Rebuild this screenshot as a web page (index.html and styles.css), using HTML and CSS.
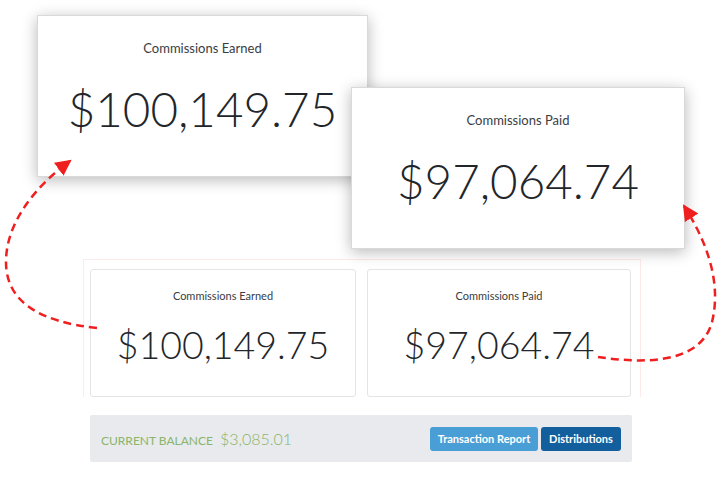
FILE: index.html
```html
<!DOCTYPE html>
<html>
<head>
<meta charset="utf-8">
<link rel="stylesheet" href="styles.css">
</head>
<body>
<div class="stage">
  <div class="callouts">
    <div class="zoom-card zoom-earned">
      <div class="zoom-title">Commissions Earned</div>
      <div class="zoom-value">$100,149.75</div>
    </div>
    <div class="zoom-card zoom-paid">
      <div class="zoom-title">Commissions Paid</div>
      <div class="zoom-value">$97,064.74</div>
    </div>
  </div>

  <div class="dashboard">
    <div class="frame">
      <div class="cards">
        <div class="card">
          <div class="card-title">Commissions Earned</div>
          <div class="card-value">$100,149.75</div>
        </div>
        <div class="card">
          <div class="card-title">Commissions Paid</div>
          <div class="card-value">$97,064.74</div>
        </div>
      </div>
    </div>
    <div class="balance-bar">
      <div class="balance">
        <span class="balance-label">CURRENT BALANCE</span>
        <span class="balance-amount">$3,085.01</span>
      </div>
      <div class="actions">
        <button class="btn btn-light">Transaction Report</button>
        <button class="btn btn-dark">Distributions</button>
      </div>
    </div>
  </div>

  <svg class="arrows" width="728" height="480" viewBox="0 0 728 480">
    <defs>
      <marker id="head" markerUnits="userSpaceOnUse" markerWidth="18" markerHeight="18" refX="14" refY="8" orient="auto">
        <path d="M0,0 L16,8 L0,16 Z" fill="#f01f1f"/>
      </marker>
    </defs>
    <path class="arrow" d="M97,328 C40,322 6,302 6,262 C6,222 36,186 70,161" marker-end="url(#head)"/>
    <path class="arrow" d="M598,357 C640,363 700,366 712,322 C722,282 706,240 684,206" marker-end="url(#head)"/>
  </svg>
</div>
</body>
</html>
```

FILE: styles.css
```css
* { box-sizing: border-box; }
html, body { margin: 0; padding: 0; background: #fff; }
body {
  font-family: Lato, "Open Sans", "Liberation Sans", sans-serif;
  color: #2b2f33;
}
.stage {
  position: relative;
  width: 728px;
  height: 480px;
  overflow: hidden;
}
.callouts {
  height: 259px;
}
.zoom-card {
  position: absolute;
  display: flex;
  flex-direction: column;
  align-items: center;
  background: #fff;
  border: 1px solid #d9d9d9;
  box-shadow: 0 3px 14px rgba(0,0,0,0.28);
  padding-top: 24px;
}
.zoom-earned { left: 37px; top: 15px; width: 331px; height: 162px; z-index: 1; }
.zoom-paid { left: 351px; top: 87px; width: 334px; height: 162px; z-index: 2; }
.zoom-title {
  font-size: 13px;
  line-height: 16px;
  color: #3a3d42;
}
.zoom-value {
  margin-top: 29px;
  font-size: 47.5px;
  line-height: 1;
  font-weight: 300;
  color: #22262b;
}
.dashboard {
  margin-left: 83px;
  width: 558px;
}
.frame {
  border: 1px solid #fdeaea;
  border-bottom: none;
  padding: 9px 10px 0 6px;
}
.cards {
  display: grid;
  grid-template-columns: 266px 264px;
  gap: 11px;
}
.card {
  height: 128px;
  border: 1px solid #e2e4e6;
  border-radius: 3px;
  display: flex;
  flex-direction: column;
  align-items: center;
  padding-top: 19px;
}
.card-title {
  font-size: 11px;
  line-height: 14px;
  color: #3a3d42;
}
.card-value {
  margin-top: 23px;
  font-size: 37.5px;
  line-height: 1;
  font-weight: 300;
  color: #22262b;
}
.balance-bar {
  margin: 18px 9px 0 7px;
  height: 47px;
  background: #e8eaed;
  border-radius: 2px;
  display: flex;
  align-items: center;
  justify-content: space-between;
  padding: 0 11px 0 11px;
}
.balance { display: flex; align-items: baseline; gap: 7px; color: #8ab56a; }
.balance-label { font-size: 12px; }
.balance-amount { font-size: 16px; font-weight: 300; }
.actions { display: flex; gap: 3px; }
.btn {
  font-family: Lato, "Open Sans", "Liberation Sans", sans-serif;
  border: none;
  border-radius: 3px;
  height: 24px;
  font-size: 11px;
  font-weight: 700;
  color: #fff;
  padding: 0;
  white-space: nowrap;
}
.btn-light { background: #4a9ed6; width: 108px; }
.btn-dark { background: #135f9d; width: 80px; }
.arrows {
  position: absolute;
  left: 0;
  top: 0;
  z-index: 5;
  pointer-events: none;
}
.arrow {
  fill: none;
  stroke: #f01f1f;
  stroke-width: 2.5;
  stroke-dasharray: 8 5;
}
```
